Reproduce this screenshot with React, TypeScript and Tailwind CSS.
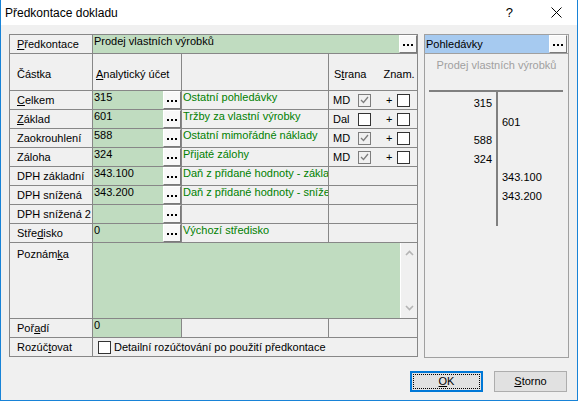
import React from 'react'

const LINE = 'border-[#878787]'

function U({ children }: { children: React.ReactNode }) {
  return <span className="underline decoration-1 underline-offset-[1px]">{children}</span>
}

function Dots() {
  return (
    <div className="w-[18px] h-full shrink-0 bg-[#f8f8f8] border-t border-l border-t-white border-l-white border-r border-b border-r-[#7a7a7a] border-b-[#7a7a7a] flex items-center justify-center gap-[2px] pt-[2px]">
      <span className="w-[2px] h-[2px] bg-black" />
      <span className="w-[2px] h-[2px] bg-black" />
      <span className="w-[2px] h-[2px] bg-black" />
    </div>
  )
}

function Check({ checked, className = '' }: { checked?: boolean; className?: string }) {
  if (checked) {
    return (
      <span className={`w-[13px] h-[13px] shrink-0 border border-[#7d7d7d] bg-[#f0f0f0] flex items-center justify-center ${className}`}>
        <svg width="9" height="8" viewBox="0 0 9 8">
          <polyline points="1,4 3.5,6.5 8,1" fill="none" stroke="#7d7d7d" strokeWidth="1.3" />
        </svg>
      </span>
    )
  }
  return <span className={`block w-[13px] h-[13px] shrink-0 border border-[#333] bg-white ${className}`} />
}

type Row = {
  label: React.ReactNode
  ucet: string
  desc: string
  strana?: 'MD' | 'Dal'
  checked?: boolean
}

const rows: Row[] = [
  { label: <><U>C</U>elkem</>, ucet: '315', desc: 'Ostatní pohledávky', strana: 'MD', checked: true },
  { label: <><U>Z</U>áklad</>, ucet: '601', desc: 'Tržby za vlastní výrobky', strana: 'Dal' },
  { label: 'Zaokrouhlení', ucet: '588', desc: 'Ostatní mimořádné náklady', strana: 'MD', checked: true },
  { label: 'Záloha', ucet: '324', desc: 'Přijaté zálohy', strana: 'MD', checked: true },
  { label: 'DPH základní', ucet: '343.100', desc: 'Daň z přidané hodnoty - základní' },
  { label: 'DPH snížená', ucet: '343.200', desc: 'Daň z přidané hodnoty - snížená' },
  { label: 'DPH snížená 2', ucet: '', desc: '' },
  { label: <>Stře<U>d</U>isko</>, ucet: '0', desc: 'Výchozí středisko' },
]

const tRows: { left?: string; right?: string }[] = [
  { left: '315' },
  { right: '601' },
  { left: '588' },
  { left: '324' },
  { right: '343.100' },
  { right: '343.200' },
]

function Label({ children, top }: { children: React.ReactNode; top?: boolean }) {
  return (
    <div className={`w-[83px] shrink-0 border-r ${LINE} pl-[7px] flex ${top ? 'items-start pt-[5px]' : 'items-center'} leading-[13px]`}>
      {children}
    </div>
  )
}

export default function App() {
  return (
    <div className="w-[578px] h-[401px] bg-[#f0f0f0] border-x border-b border-[#1883d7] flex flex-col text-[11px] text-black font-['Liberation_Sans',Arial,sans-serif] overflow-hidden">
      {/* title bar */}
      <div className="h-[25px] shrink-0 bg-white flex items-center pl-[4px] text-[12px]">
        <span>Předkontace dokladu</span>
        <span className="ml-auto mr-[38px] text-[13px]">?</span>
        <svg width="11" height="11" viewBox="0 0 11 11" className="mr-[15px]">
          <path d="M0.5 0.5 L10.5 10.5 M10.5 0.5 L0.5 10.5" stroke="#000" strokeWidth="1" />
        </svg>
      </div>

      <div className="flex items-start gap-[6px] pl-[8px] pt-[9px]">
        {/* form grid */}
        <div className={`w-[409px] border-x border-t ${LINE} flex flex-col`}>
          <div className={`h-[19px] flex border-b ${LINE}`}>
            <Label><span><U>P</U>ředkontace</span></Label>
            <div className="flex-1 bg-[#c0dcc0] pl-[1px] leading-[13px]">Prodej vlastních výrobků</div>
            <Dots />
          </div>

          <div className={`h-[37px] flex border-b ${LINE}`}>
            <Label><span className="pt-[5px]">Částka</span></Label>
            <div className={`w-[89px] shrink-0 border-r ${LINE} pl-[3px] pt-[5px] flex items-center`}>
              <span><U>A</U>nalytický účet</span>
            </div>
            <div className={`w-[147px] shrink-0 border-r ${LINE}`} />
            <div className="flex-1 flex items-center pl-[5px] pt-[5px]">
              <span>S<U>t</U>rana</span>
              <span className="ml-[17px]">Znam.</span>
            </div>
          </div>

          {rows.map((r, i) => (
            <div key={i} className={`h-[19px] flex border-b ${LINE}`}>
              <Label><span>{r.label}</span></Label>
              <div className={`w-[89px] shrink-0 flex border-r ${LINE}`}>
                <div className="w-[70px] bg-[#c0dcc0] pl-[1px] leading-[13px]">{r.ucet}</div>
                <Dots />
              </div>
              <div className={`w-[147px] shrink-0 border-r ${LINE} pl-[1px] leading-[13px] text-[#008000] whitespace-nowrap overflow-hidden`}>
                {r.desc}
              </div>
              <div className="flex-1 flex items-center pl-[4px]">
                {r.strana && (
                  <>
                    <span className="w-[25px]">{r.strana}</span>
                    <Check checked={r.checked} />
                    <span className="ml-[15px]">+</span>
                    <Check className="ml-[5px]" />
                  </>
                )}
              </div>
            </div>
          ))}

          <div className={`h-[76px] flex border-b ${LINE}`}>
            <Label top><span>Poznám<U>k</U>a</span></Label>
            <div className="flex-1 bg-[#c0dcc0]" />
            <div className="w-[17px] shrink-0 border-l border-white flex flex-col items-center justify-between py-[7px]">
              <svg width="9" height="6" viewBox="0 0 9 6">
                <polyline points="1,5 4.5,1.5 8,5" fill="none" stroke="#b4b4b4" strokeWidth="1.6" />
              </svg>
              <svg width="9" height="6" viewBox="0 0 9 6">
                <polyline points="1,1 4.5,4.5 8,1" fill="none" stroke="#b4b4b4" strokeWidth="1.6" />
              </svg>
            </div>
          </div>

          <div className={`h-[19px] flex border-b ${LINE}`}>
            <Label><span>Poř<U>a</U>dí</span></Label>
            <div className={`w-[89px] shrink-0 border-r ${LINE} bg-[#c0dcc0] pl-[1px] leading-[13px]`}>0</div>
            <div className={`w-[147px] shrink-0 border-r ${LINE}`} />
            <div className="flex-1" />
          </div>

          <div className={`h-[19px] flex border-b ${LINE}`}>
            <Label><span>Rozúč<U>t</U>ovat</span></Label>
            <div className="flex-1 flex items-center pl-[5px]">
              <Check />
              <span className="ml-[3px] whitespace-nowrap">Detailní rozúčtování po použití předkontace</span>
            </div>
          </div>
        </div>

        {/* account panel */}
        <div className="w-[145px] h-[324px] border border-[#a0a0a0] flex flex-col">
          <div className="h-[19px] flex pr-[1px] border-b border-[#a0a0a0]">
            <div className="flex-1 bg-[#a6caf0] pl-[1px] flex items-center">Pohledávky</div>
            <Dots />
          </div>
          <div className="mt-[5px] text-center text-[#a0a0a0] leading-[13px]">Prodej vlastních výrobků</div>
          <div className="mt-[18px] ml-[4px] mr-[5px] h-[2px] bg-[#808080]" />
          <div className="ml-[4px] h-[134px] flex">
            <div className="w-[67px] pt-[2px] pr-[4px] flex flex-col">
              {tRows.map((t, i) => (
                <div key={i} className="h-[18.5px] flex items-center justify-end">{t.left ?? ''}</div>
              ))}
            </div>
            <div className="w-[2px] bg-[#808080]" />
            <div className="flex-1 pt-[2px] pl-[4px] flex flex-col">
              {tRows.map((t, i) => (
                <div key={i} className="h-[18.5px] flex items-center">{t.right ?? ''}</div>
              ))}
            </div>
          </div>
        </div>
      </div>

      {/* buttons */}
      <div className="flex justify-end gap-[11px] pr-[10px] mt-[13px]">
        <button className="w-[73px] h-[21px] bg-[#e1e1e1] border-2 border-[#0078d7] p-[1px]">
          <div className="w-full h-full border border-dotted border-black flex items-center justify-center">
            <span><U>O</U>K</span>
          </div>
        </button>
        <button className="w-[73px] h-[21px] bg-[#e1e1e1] border border-[#adadad] flex items-center justify-center">
          <span><U>S</U>torno</span>
        </button>
      </div>
    </div>
  )
}
